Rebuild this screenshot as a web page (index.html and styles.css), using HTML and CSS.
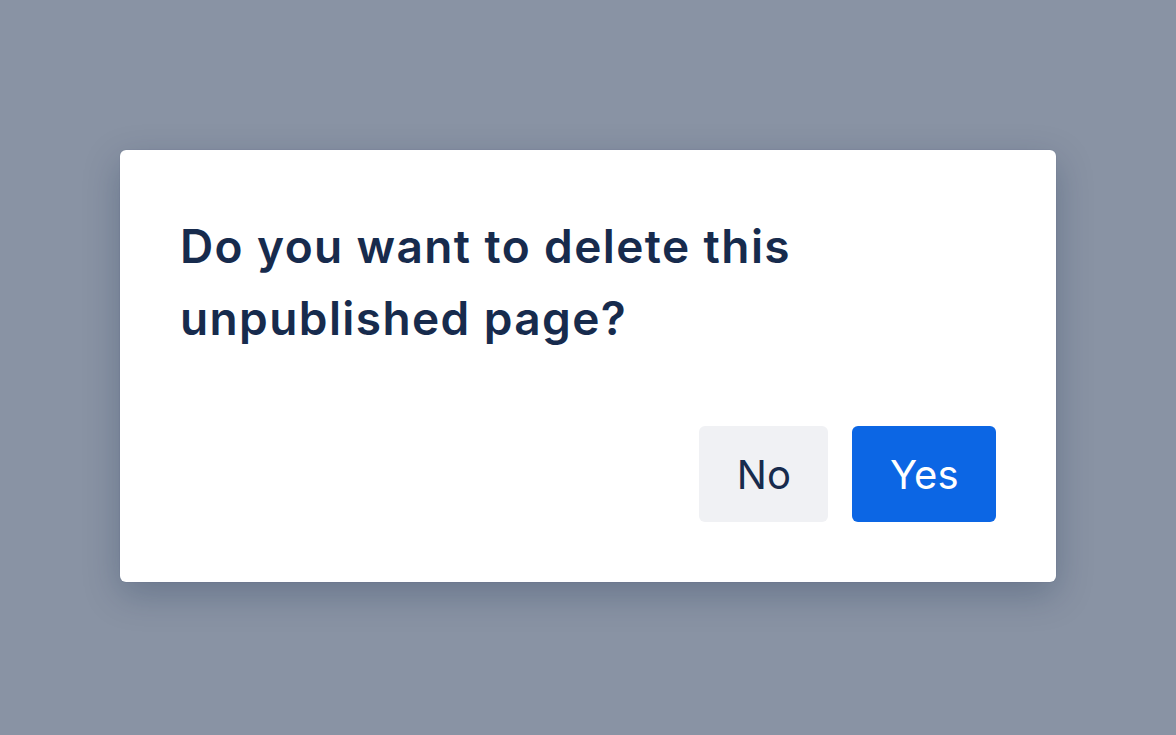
FILE: index.html
```html
<html><head><meta charset="UTF-8">
<meta name="viewport" content="width=device-width, initial-scale=1.0">
<title>Delete page</title>
<link rel="stylesheet" href="styles.css">
</head>
<body>
    <div class="dialog">
        <h1 class="dialog-title">Do you want to delete this<br>unpublished page?</h1>
        <div class="dialog-actions">
            <button class="btn btn-subtle">No</button>
            <button class="btn btn-primary">Yes</button>
        </div>
    </div>
</body>
</html>
```
FILE: styles.css
```css
:root {
    --overlay-color: #8993A4;
    --surface-color: #FFFFFF;
    --text-color: #172B4D;
    --subtle-color: #F0F1F4;
    --primary-color: #0C66E4;
}

body {
    font-family: 'Inter', 'Noto Sans', sans-serif;
    background-color: var(--overlay-color);
    display: flex;
    justify-content: center;
    align-items: center;
    height: calc(100vh - 3px);
    margin: 0;
    padding: 0;
}

.dialog {
    background-color: var(--surface-color);
    border-radius: 6px;
    box-shadow: 0 12px 36px rgba(9, 30, 66, 0.25), 0 0 1px rgba(9, 30, 66, 0.3);
    width: 936px;
    height: 432px;
    box-sizing: border-box;
    padding: 60px;
    display: flex;
    flex-direction: column;
}

.dialog-title {
    margin: 0;
    font-size: 46px;
    font-weight: 600;
    line-height: 72px;
    letter-spacing: 1.4px;
    color: var(--text-color);
}

.dialog-actions {
    margin-top: auto;
    display: flex;
    justify-content: flex-end;
    gap: 24px;
}

.btn {
    font-family: inherit;
    font-size: 40px;
    font-weight: 400;
    height: 96px;
    padding: 0 37.5px;
    border: none;
    border-radius: 6px;
    cursor: pointer;
}

.btn-subtle {
    background-color: var(--subtle-color);
    color: var(--text-color);
}

.btn-primary {
    background-color: var(--primary-color);
    color: var(--surface-color);
}
```
